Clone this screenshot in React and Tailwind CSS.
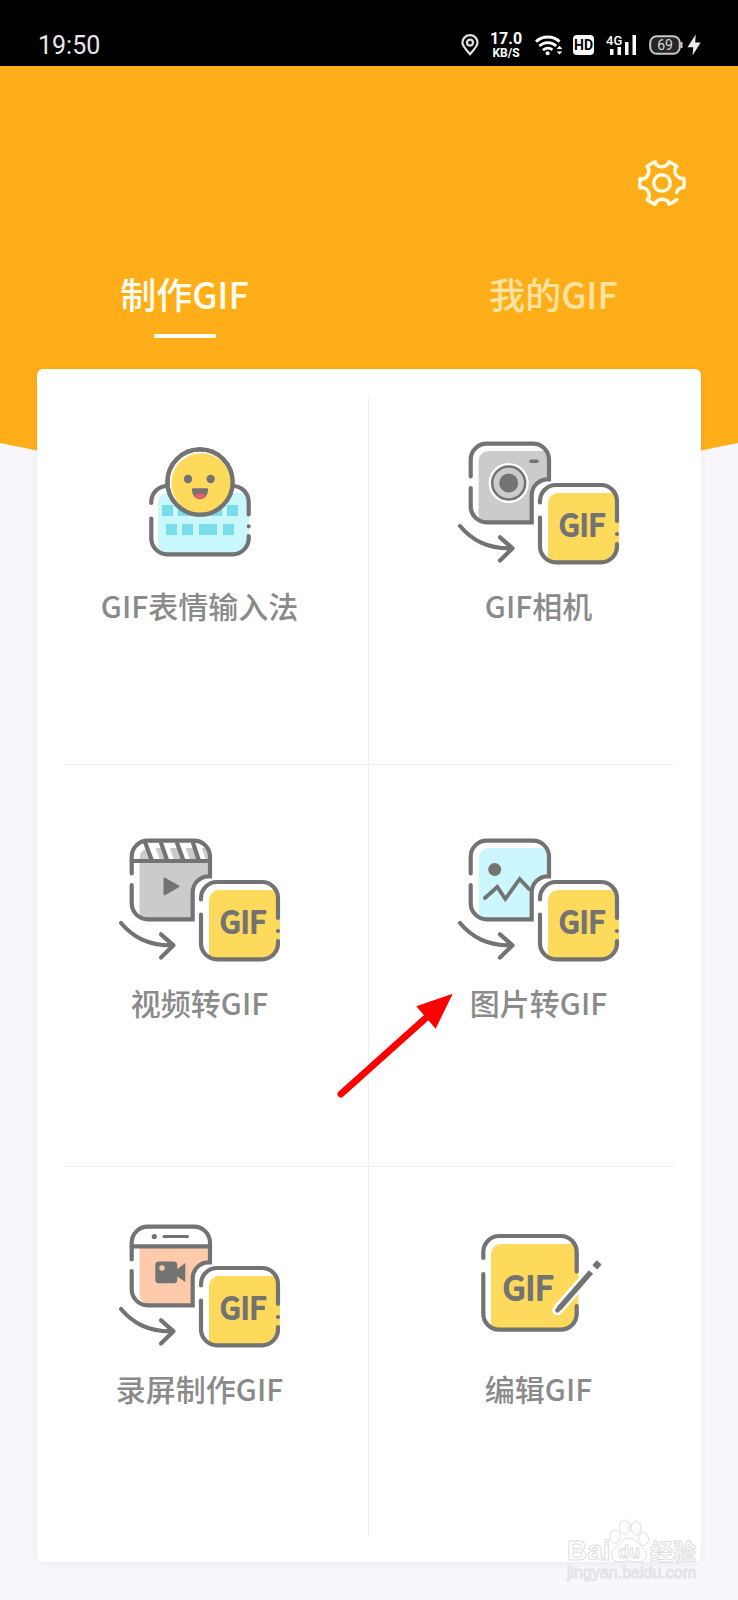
const INK = '#737373'

function StatusBar() {
  return (
    <div className="flex h-[66px] items-end justify-between bg-black pr-[37px] pb-2 pl-[38px] font-[Roboto,sans-serif] text-[#e8e8e8]">
      <time className="text-[25px] leading-6">19:50</time>
      <div className="flex h-[26px] items-center gap-3">
        <div className="flex items-center gap-[10px]">
          {/* Location */}
          <svg width="18" height="22" viewBox="0 0 18 22" fill="none" stroke="#e0e0e0" strokeWidth="2.2">
            <path d="M9 20.2C4.6 15.4 1.4 12 1.4 8.6a7.6 7.4 0 0 1 15.2 0C16.6 12 13.4 15.4 9 20.2Z" />
            <circle cx="9" cy="8.6" r="3" />
          </svg>
          <div className="w-[34px] text-center font-bold text-white">
            <div className="text-[16px] leading-[16px]">17.0</div>
            <div className="text-[12px] leading-[12px]">KB/S</div>
          </div>
        </div>
        <div className="flex items-center gap-[10px]">
          {/* Wifi */}
          <svg width="28" height="22" viewBox="0 0 28 22" fill="none" stroke="#fff" strokeWidth="2.8">
            <path d="M1 7.6a17.4 17.4 0 0 1 23.6 0" />
            <path d="M4.4 12a12 12 0 0 1 16.8 0" />
            <path d="M8 16.2a7 7 0 0 1 9.4-.4" />
            <circle cx="12.6" cy="19.2" r="2" fill="#fff" stroke="none" />
            <path d="m21.6 15 2.9-3.2 2.9 3.2ZM21.6 17.4l2.9 3.2 2.9-3.2Z" fill="#fff" stroke="none" />
          </svg>
          <span className="flex h-5 w-[21px] items-center justify-center rounded-[4px] bg-white text-[14px] font-bold text-black">HD</span>
        </div>
        {/* Mobile signal */}
        <svg width="31" height="22" viewBox="0 0 31 22" fill="#fff">
          <text x="0" y="11" fontSize="13" fontWeight="500">4G</text>
          <path d="M4 15H7.500V21H4ZM11.500 13H15V21H11.500ZM19 8H22.500V21H19ZM26.500 1H30V21H26.500Z" />
        </svg>
        <div className="flex items-center gap-1">
          <svg width="34" height="20" viewBox="0 0 34 20" fill="none">
            <rect x="1.200" y="1.200" width="29.600" height="17.600" rx="6.500" fill="#262626" stroke="#c8c8c8" strokeWidth="2" />
            <path d="M32.500 7v6" stroke="#c8c8c8" strokeWidth="2" />
            <text x="16" y="15" textAnchor="middle" fontSize="14" fill="#d8d8d8">69</text>
          </svg>
          <svg width="14" height="22" viewBox="0 0 14 22" fill="#ececec">
            <path d="M8.700.5.5 13.200H6.300L5.500 21.500 13.700 8.500H8.200Z" />
          </svg>
        </div>
      </div>
    </div>
  )
}

function GearIcon() {
  return (
    <svg width="50" height="50" viewBox="-25 -25 50 50" fill="none" stroke="#fffbe6" strokeWidth="3.500" strokeLinecap="round" strokeLinejoin="round">
      <circle r="8.300" />
      {/* One tooth and the valley after it, turned round the hub */}
      {[60, 120, 180, 240, 300].map((deg) => (
        <path key={deg} transform={`rotate(${deg})`} d="M21.800-4.500Q22.500 0 21.800 4.500C15.500 2.500 10.500 11 14.800 16.600" />
      ))}
      <path d="M21.800-4.500Q22.500 0 21.800 4.500Q16 4.500 14.600 9.500" />
    </svg>
  )
}

function GifText({ x, y, size }) {
  return (
    <text x={x} y={y} fontSize={size} textAnchor="middle" fill={INK} strokeWidth="2" className="font-['Noto_Sans_CJK_SC',sans-serif]">
      GIF
    </text>
  )
}

function GifTile() {
  return (
    <g>
      <path d="M91 118V62a10 10 0 0 1 10-10H156L162 60V105.300A16 16 0 0 1 146 121H99Z" fill="#fdd95c" stroke="none" />
      <path d="M83 61.500V60A16 16 0 0 1 99 44H144A16 16 0 0 1 160 60V80" />
      <path d="M160 93h.01" />
      <path d="M160 103v2.300A16 16 0 0 1 144 121.300H99A16 16 0 0 1 83 105.300V76.500" />
      <GifText x={125} y={95} size={30} />
    </g>
  )
}

function IconFrame({ children }) {
  return (
    <svg width="164" height="124" viewBox="0 0 164 124" fill="none" stroke={INK} strokeWidth="4.200" strokeLinecap="round" strokeLinejoin="round" aria-hidden="true">
      {children}
    </svg>
  )
}

// Source tile with a bite for the GIF tile, and the arrow between them
function ConvertIcon({ fill, header, children }) {
  return (
    <IconFrame>
      {header ? (
        <path d="M21.500 70V23H92V38.500H90A16 16 0 0 0 74.700 54V81.300H34Q21.500 80 21.500 70Z" fill={fill} stroke="none" />
      ) : (
        <path d="M21.500 78V20A10 10 0 0 1 31.500 10H89L92 18.700V38.500H90A16 16 0 0 0 74.700 54V81.300H29Z" fill={fill} stroke="none" />
      )}
      {children}
      <path d="M13.700 35.500V18.700A16 16 0 0 1 29.700 2.700H76A16 16 0 0 1 92 18.700V38.300H90A16 16 0 0 0 74.700 54V81.300H29.700A16 16 0 0 1 13.700 65.300V47" strokeLinejoin="miter" />
      <path d="M3 85C15 99 30 108 55 107.300M43 96.300 55.500 107.300 43 119.500" />
      <GifTile />
    </IconFrame>
  )
}

function KeyboardIcon() {
  return (
    <IconFrame>
      <path d="M40 108V62a10 10 0 0 1 10-10H127L131 60V98L120 113H50Z" fill="#c8f8fe" stroke="none" />
      <path d="M44 64h11v11H44ZM60 64h11v11H60ZM93 64h11v11H93ZM109 64h11v11H109ZM48 83h11v11H48ZM64 83h11v11H64ZM81 83h18v11H81ZM105 83h11v11H105Z" fill="#78dcea" stroke="none" />
      <path d="M33.300 62V60A16 16 0 0 1 49.300 45M115 45A16 16 0 0 1 130.700 61V73.500M130.700 85.300h.01M130.700 95V97.300A16 16 0 0 1 114.700 113.300H49.300A16 16 0 0 1 33.300 97.300V77.500" />
      <circle cx="82" cy="41" r="32.600" fill="#fff" />
      <circle cx="83.300" cy="42.200" r="30" fill="#fdd95c" stroke="none" />
      <circle cx="82" cy="41" r="32.600" />
      <circle cx="70" cy="38" r="4.200" fill={INK} stroke="none" />
      <circle cx="92.700" cy="38" r="4.200" fill={INK} stroke="none" />
      <path d="M75 47.300H89Q90.500 47.300 90.200 49Q89 58.200 82 58.200T73.800 49Q73.500 47.300 75 47.300Z" fill={INK} stroke="none" />
      <ellipse cx="82" cy="55" rx="4.800" ry="2.800" fill="#f0586c" stroke="none" />
    </IconFrame>
  )
}

function CameraIcon() {
  return (
    <ConvertIcon fill="#cbcbcb">
      <circle cx="51.700" cy="42" r="20" fill="#fff" stroke="none" />
      <circle cx="51.700" cy="42" r="16.500" fill="#cbcbcb" strokeWidth="2.500" />
      <circle cx="51.700" cy="42" r="9.500" fill={INK} stroke="none" />
      <path d="M74 20.300H80" strokeWidth="3.400" />
    </ConvertIcon>
  )
}

function VideoIcon() {
  return (
    <ConvertIcon fill="#cbcbcb">
      <path d="M27 5H36L42 22H33ZM43 5H50L56 22H49ZM59 5H66L72 22H65ZM75 5H82L88 22H81Z" fill="#fff" stroke="none" />
      <path d="M13.700 23H92" />
      <path d="M27 4 33.700 22M42.700 4 49 22M58.700 4 65.300 22M74.700 4 80.700 22" strokeLinecap="butt" />
      <path d="M46.500 40.500 60.500 48.300 46.500 56.300Z" fill={INK} strokeWidth="2" />
    </ConvertIcon>
  )
}

function PictureIcon() {
  return (
    <ConvertIcon fill="#cdf7fe">
      <circle cx="37.700" cy="31.500" r="6.500" fill={INK} stroke="none" />
      <path d="M28 60 40.300 49 48.300 61 62.700 41 72 51" strokeWidth="3.800" strokeLinejoin="miter" />
    </ConvertIcon>
  )
}

function ScreenIcon() {
  return (
    <ConvertIcon fill="#fdcbab" header>
      <path d="M13.700 22.300H92" />
      <circle cx="36.300" cy="12.500" r="2.600" fill={INK} stroke="none" />
      <path d="M46 12.500H69.500" strokeWidth="3" />
      <rect x="37.300" y="37.500" width="22" height="21.700" rx="3.500" fill={INK} stroke="none" />
      <path d="M58 46 67.300 39V58L58 51.500Z" fill={INK} stroke="none" />
      <circle cx="44" cy="44" r="2.700" fill="#fdcbab" stroke="none" />
    </ConvertIcon>
  )
}

function EditIcon() {
  return (
    <IconFrame>
      <path d="M34 102V30A10 10 0 0 1 44 20H117L121.500 29V91L108 105H42Z" fill="#fdd95c" stroke="none" />
      <path d="M26.300 34V28A16 16 0 0 1 42.300 12H103.700A16 16 0 0 1 119.700 28V47.500M119.700 82V89.700A16 16 0 0 1 103.700 105.700H42.300A16 16 0 0 1 26.300 89.700V50" />
      <GifText x={71} y={76} size={33} />
      <path d="M100.500 86 135 46.500" stroke="#fff" strokeWidth="10.500" />
      <path d="M102 84.500 134 48" strokeWidth="5.600" strokeLinecap="butt" />
      <path d="M100.500 86.200 103 83.500" strokeWidth="4.600" />
      <path d="M137.800 43.300 142.200 38.300" strokeWidth="6.500" strokeLinecap="butt" />
    </IconFrame>
  )
}

function RedArrow() {
  return (
    <svg className="pointer-events-none absolute top-[227px] -left-[65px]" width="118" height="108" viewBox="0 0 118 108" aria-hidden="true">
      <path d="M4 102 90 25" stroke="#fe0000" strokeWidth="7" strokeLinecap="round" />
      <path d="M115.700 1.700 79.300 14.300 98.700 36.700Z" fill="#fe0000" />
    </svg>
  )
}

function Watermark() {
  return (
    <svg className="pointer-events-none absolute right-[38px] bottom-3 font-['Noto_Sans_CJK_SC',sans-serif]" width="134" height="70" viewBox="0 0 134 70" fill="#fff" stroke="#dedee0" strokeWidth="1">
      <text x="1" y="42" fontSize="28" fontWeight="700" className="font-['Liberation_Sans',sans-serif]">Bai</text>
      <path d="M63 20c6 0 9 6 14 10 6 5 4 14-4 14-4 0-6-1-10-1s-6 1-10 1c-8 0-10-9-4-14 5-4 8-10 14-10Z" />
      <ellipse cx="49" cy="18.500" rx="5" ry="6.500" />
      <ellipse cx="58.500" cy="9" rx="5" ry="7" />
      <ellipse cx="70" cy="10" rx="5" ry="7" />
      <ellipse cx="77.500" cy="21" rx="5" ry="6.500" />
      <text x="63" y="40" fontSize="18" fontWeight="700" textAnchor="middle" className="font-['Liberation_Sans',sans-serif]">du</text>
      <text x="84" y="42" fontSize="23" fontWeight="700">经验</text>
      <text x="1" y="60" fontSize="16" fill="#e4e4e8" stroke="#e4e4e8" className="font-['Liberation_Sans',sans-serif]">jingyan.baidu.com</text>
    </svg>
  )
}

const rows = [
  {
    pad: 'pt-[46px] pb-[136px]',
    items: [
      { label: 'GIF表情输入法', Icon: KeyboardIcon },
      { label: 'GIF相机', Icon: CameraIcon },
    ],
  },
  {
    pad: 'pt-[73px] pb-[141px]',
    items: [
      { label: '视频转GIF', Icon: VideoIcon },
      { label: '图片转GIF', Icon: PictureIcon, marked: true },
    ],
  },
  {
    pad: 'pt-[57px] pb-[125px]',
    items: [
      { label: '录屏制作GIF', Icon: ScreenIcon },
      { label: '编辑GIF', Icon: EditIcon },
    ],
  },
]

function Tool({ label, Icon, marked, pad }) {
  return (
    <div className="relative">
      <button type="button" className={`flex w-full flex-col items-center gap-[17px] ${pad}`}>
        <Icon />
        <span className="text-[30px] leading-[46px] font-medium whitespace-nowrap text-[#8a8a8a]">{label}</span>
      </button>
      {marked && <RedArrow />}
    </div>
  )
}

export default function App() {
  return (
    <div className="relative min-h-screen bg-[#f7f7fc] pb-[38px] font-['Noto_Sans_CJK_SC',sans-serif]">
      <StatusBar />

      <header className="bg-[#ffae1a] pt-[92px] pb-[180px] [clip-path:polygon(0_0,100%_0,100%_calc(100%-75px),50%_100%,0_calc(100%-75px))]">
        <div className="flex justify-end pr-[51px]">
          <button type="button" aria-label="设置">
            <GearIcon />
          </button>
        </div>
        <nav className="mt-[63px] grid grid-cols-2 text-[36px] leading-[44px] font-medium">
          <button type="button" className="flex flex-col items-center gap-[19px] text-[#fffdf0]">
            制作GIF
            <span className="h-1 w-[62px] bg-[#fffdf0]" />
          </button>
          <button type="button" className="flex flex-col items-center text-[#ffe3a0]">
            我的GIF
          </button>
        </nav>
      </header>

      <main className="relative mx-[37px] -mt-[149px] rounded-md bg-white px-[26px] py-[26px] shadow-[0_2px_8px_rgba(0,0,0,0.06)]">
        <div className="absolute inset-y-[26px] left-1/2 -ml-px w-px bg-[#f1f1f3]" />
        {rows.map((row) => (
          <div key={row.pad} className="grid grid-cols-2 gap-x-[66px] border-b border-[#f1f1f3] last:border-b-0">
            {row.items.map((item) => (
              <Tool key={item.label} pad={row.pad} {...item} />
            ))}
          </div>
        ))}
      </main>

      <Watermark />
    </div>
  )
}
